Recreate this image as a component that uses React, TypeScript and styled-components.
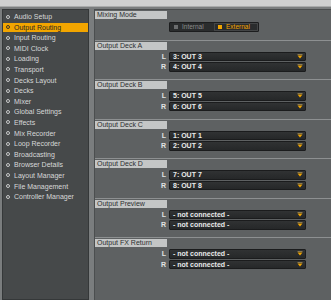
import React from "react";
import styled, { createGlobalStyle } from "styled-components";

const colors = {
  windowBg: "#7a7d7e",
  titleBar: "#cfd0d0",
  sidebar: "#46494a",
  panel: "#5e6162",
  separator: "#8d9091",
  header: "#c4c6c6",
  control: "#2a2c2d",
  orange: "#f2a500",
  text: "#d6d8d8",
};

const GlobalStyle = createGlobalStyle`
  body {
    margin: 0;
    background: ${colors.windowBg};
    font-family: "Liberation Sans", Arial, sans-serif;
  }
`;

const Window = styled.div`
  width: 331px;
  height: 300px;
  display: flex;
  flex-direction: column;
  overflow: hidden;
  background: ${colors.windowBg};
`;

const TitleBar = styled.div`
  height: 6px;
  flex: none;
  background: ${colors.titleBar};
  border-bottom: 1px solid #a9abab;
  overflow: hidden;
  text-align: center;
  padding-left: 26px;
`;

const Title = styled.span`
  display: inline-block;
  font-size: 8px;
  line-height: 8px;
  margin-top: -3px;
  color: #6d6f70;
`;

const Body = styled.div`
  flex: 1;
  display: flex;
  gap: 5px;
  padding: 2px 0 0 2px;
  min-height: 0;
`;

const Sidebar = styled.ul`
  list-style: none;
  margin: 0;
  padding: 2px 0 0;
  width: 85px;
  flex: none;
  background: ${colors.sidebar};
  border: 1px solid #353839;
`;

const NavItem = styled.li<{ $active?: boolean }>`
  display: flex;
  align-items: center;
  gap: 4px;
  height: 9px;
  margin-bottom: 1.6px;
  padding-left: 3px;
  font-size: 7px;
  white-space: nowrap;
  background: ${(p) => (p.$active ? colors.orange : "transparent")};
  color: ${(p) => (p.$active ? "#2a2621" : colors.text)};
`;

const Bullet = styled.span<{ $active?: boolean }>`
  width: 2px;
  height: 2px;
  border-radius: 50%;
  border: 1px solid ${(p) => (p.$active ? "#3a3328" : "#c9cbcb")};
  flex: none;
`;

const Main = styled.div`
  flex: 1;
  background: ${colors.panel};
  border-left: 1px solid #4b4e4f;
  border-top: 1px solid #4b4e4f;
  display: flex;
  flex-direction: column;
`;

const Section = styled.section<{ $first?: boolean }>`
  border-top: ${(p) => (p.$first ? "none" : `1px solid ${colors.separator}`)};
  padding: 1px 0 ${(p) => (p.$first ? "8px" : "7.5px")};
  display: flex;
  flex-direction: column;
`;

const SectionHeader = styled.div`
  width: 70px;
  height: 8px;
  line-height: 8px;
  padding-left: 2px;
  background: ${colors.header};
  color: #2e3031;
  font-size: 7px;
  white-space: nowrap;
  margin-bottom: 2px;
`;

const Row = styled.div`
  display: flex;
  align-items: center;
  height: 9.5px;
  & + & {
    margin-top: 1px;
  }
`;

const ChannelLabel = styled.span`
  width: 71px;
  margin-right: 3px;
  text-align: right;
  font-size: 7px;
  font-weight: bold;
  color: #e2e4e4;
`;

const Select = styled.div`
  box-sizing: border-box;
  width: 137px;
  height: 9.5px;
  display: flex;
  align-items: center;
  justify-content: space-between;
  padding: 0 2px 0 3px;
  background: linear-gradient(#303233, #262829);
  border: 1px solid #1b1c1d;
  border-radius: 1px;
  font-size: 7px;
  font-weight: bold;
  color: #e9eaea;
  white-space: nowrap;
`;

const Toggle = styled.div`
  box-sizing: border-box;
  margin: 1px 0 0 74px;
  width: 90px;
  height: 9.5px;
  display: flex;
  background: ${colors.control};
  border: 1px solid #1c1d1e;
  border-radius: 1px;
`;

const ToggleOption = styled.div<{ $on?: boolean }>`
  flex: 1;
  display: flex;
  align-items: center;
  gap: 4px;
  padding-left: 3px;
  font-size: 6.5px;
  color: ${(p) => (p.$on ? colors.orange : "#8a8c8c")};
  border: ${(p) => (p.$on ? "1px solid #434546" : "1px solid transparent")};
`;

const Swatch = styled.span<{ $on?: boolean }>`
  width: 4px;
  height: 4px;
  background: ${(p) => (p.$on ? colors.orange : "#6b6d6e")};
`;

const Arrow = () => (
  <svg width="6" height="5" viewBox="0 0 6 5">
    <rect x="0.5" y="0" width="5" height="1" fill="#8b7a50" />
    <path d="M0.5 1.5 H5.5 L3 4.5 Z" fill="#f0a400" />
  </svg>
);

const navItems = [
  "Audio Setup",
  "Output Routing",
  "Input Routing",
  "MIDI Clock",
  "Loading",
  "Transport",
  "Decks Layout",
  "Decks",
  "Mixer",
  "Global Settings",
  "Effects",
  "Mix Recorder",
  "Loop Recorder",
  "Broadcasting",
  "Browser Details",
  "Layout Manager",
  "File Management",
  "Controller Manager",
];

const outputs = [
  { title: "Output Deck A", l: "3: OUT 3", r: "4: OUT 4" },
  { title: "Output Deck B", l: "5: OUT 5", r: "6: OUT 6" },
  { title: "Output Deck C", l: "1: OUT 1", r: "2: OUT 2" },
  { title: "Output Deck D", l: "7: OUT 7", r: "8: OUT 8" },
  { title: "Output Preview", l: "- not connected -", r: "- not connected -" },
  { title: "Output FX Return", l: "- not connected -", r: "- not connected -" },
];

const App: React.FC = () => {
  return (
    <Window>
      <GlobalStyle />
      <TitleBar>
        <Title>Preferences</Title>
      </TitleBar>
      <Body>
        <Sidebar>
          {navItems.map((item) => {
            const active = item === "Output Routing";
            return (
              <NavItem key={item} $active={active}>
                <Bullet $active={active} />
                {item}
              </NavItem>
            );
          })}
        </Sidebar>
        <Main>
          <Section $first>
            <SectionHeader>Mixing Mode</SectionHeader>
            <Toggle>
              <ToggleOption>
                <Swatch />
                Internal
              </ToggleOption>
              <ToggleOption $on>
                <Swatch $on />
                External
              </ToggleOption>
            </Toggle>
          </Section>
          {outputs.map((o) => (
            <Section key={o.title}>
              <SectionHeader>{o.title}</SectionHeader>
              <Row>
                <ChannelLabel>L</ChannelLabel>
                <Select>
                  {o.l}
                  <Arrow />
                </Select>
              </Row>
              <Row>
                <ChannelLabel>R</ChannelLabel>
                <Select>
                  {o.r}
                  <Arrow />
                </Select>
              </Row>
            </Section>
          ))}
        </Main>
      </Body>
    </Window>
  );
};

export default App;
